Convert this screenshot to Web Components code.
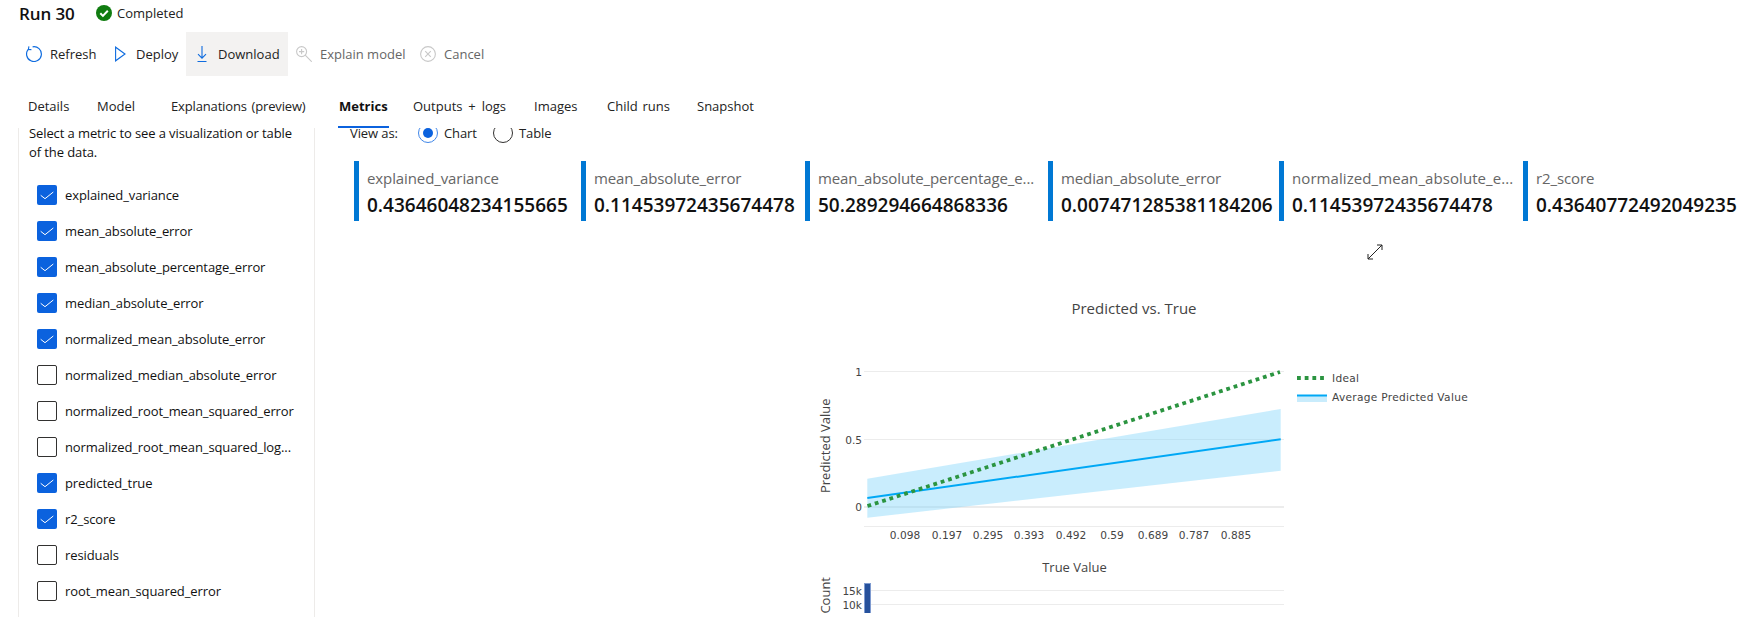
<!DOCTYPE html>
<html>
<head>
<meta charset="utf-8">
<style>
  html, body { margin: 0; height: 632px; overflow: hidden; background: #fff; }
  body { font-family: "Open Sans", "Liberation Sans", sans-serif; color: #111; }
</style>
</head>
<body>
<run-page></run-page>
<script>
const UI_FONT = '"Open Sans", "Liberation Sans", sans-serif';

class RunHeader extends HTMLElement {
  constructor() {
    super();
    this.attachShadow({ mode: 'open' });
    this.shadowRoot.innerHTML = `
      <style>
        :host { display: flex; align-items: center; height: 26px; padding-left: 19px; font-family: ${UI_FONT}; }
        h1 { margin: 0; font-size: 17px; font-weight: 600; color: #111; width: 77px; letter-spacing: -.1px; }
        svg { display: block; margin-right: 5px; }
        span { font-size: 13px; color: #222; }
      </style>
      <h1><slot></slot></h1>
      <svg width="16" height="16" viewBox="0 0 16 16">
        <circle cx="8" cy="8" r="8" fill="#107c10"/>
        <path d="M4.3 8.3l2.6 2.6 4.9-5.2" fill="none" stroke="#fff" stroke-width="2"/>
      </svg>
      <span>Completed</span>`;
  }
}
customElements.define('run-header', RunHeader);

const TOOL_ICONS = {
  refresh: '<path d="M6.6 .8A7.4 7.4 0 1 1 2.5 3.1" fill="none" stroke="#0f6cdf" stroke-width="1.2"/><path d="M2.9 .4L2.4 3.4 5.4 3.6" fill="none" stroke="#0f6cdf" stroke-width="1.1"/>',
  deploy: '<path d="M3.6 1.2v13.6L13 8z" fill="none" stroke="#0f6cdf" stroke-width="1.1"/>',
  download: '<path d="M8 0v12.2M4 8.2l4 4 4-4M3.5 15.5h9" fill="none" stroke="#0f6cdf" stroke-width="1.1"/>',
  explain: '<circle cx="5.6" cy="5.6" r="5" fill="none" stroke="#c8c8c8" stroke-width="1.1"/><path d="M9.2 9.2l6.6 6.6M5.6 3v5.2M3 5.6h5.2" fill="none" stroke="#c8c8c8" stroke-width="1.1"/>',
  cancel: '<circle cx="8" cy="8" r="7.4" fill="none" stroke="#c8c8c8" stroke-width="1.1"/><path d="M5.2 5.2l5.6 5.6M10.8 5.2l-5.6 5.6" fill="none" stroke="#c8c8c8" stroke-width="1.1"/>'
};

class ToolButton extends HTMLElement {
  constructor() {
    super();
    this.attachShadow({ mode: 'open' });
    const icon = TOOL_ICONS[this.getAttribute('icon')];
    this.shadowRoot.innerHTML = `
      <style>
        :host { display: flex; align-items: center; height: 44px; font-size: 13px; font-family: ${UI_FONT}; color: #222; white-space: nowrap; }
        :host([active]), :host([disabled]) { padding-left: 8px; }
        :host([active]) { background: #f3f2f1; }
        :host([disabled]) { color: #666; }
        svg { display: block; flex: none; margin-right: 8px; }
      </style>
      <svg width="16" height="16" viewBox="0 0 16 16">${icon}</svg><slot></slot>`;
  }
}
customElements.define('tool-button', ToolButton);

class RunToolbar extends HTMLElement {
  constructor() {
    super();
    this.attachShadow({ mode: 'open' });
    this.shadowRoot.innerHTML = `
      <style>
        :host { display: grid; grid-template-columns: 86px 74px 102px 124px auto; justify-content: start; margin-top: 6px; height: 44px; padding-left: 26px; }
      </style>
      <slot></slot>`;
  }
}
customElements.define('run-toolbar', RunToolbar);

class TabBar extends HTMLElement {
  constructor() {
    super();
    this.attachShadow({ mode: 'open' });
    this.shadowRoot.innerHTML = `
      <style>
        :host { display: grid; grid-template-columns: 69px 74px 168px 74px 121px 73px 90px auto; justify-content: start; height: 52px; padding-left: 28px; font-family: ${UI_FONT}; font-size: 13px; word-spacing: 1.5px; color: #222; white-space: nowrap; }
      </style>
      <slot></slot>`;
  }
}
customElements.define('tab-bar', TabBar);

class TabItem extends HTMLElement {
  constructor() {
    super();
    this.attachShadow({ mode: 'open' });
    this.shadowRoot.innerHTML = `
      <style>
        :host { display: block; justify-self: start; padding-top: 20px; line-height: 20px; }
        :host([selected]) { font-weight: 700; color: #111; }
        :host([selected]) b { display: block; height: 2px; margin: 10px -1px 0; background: #0b62de; }
      </style>
      <slot></slot><b></b>`;
  }
}
customElements.define('tab-item', TabItem);

class MetricCheck extends HTMLElement {
  constructor() {
    super();
    this.attachShadow({ mode: 'open' });
    const on = this.hasAttribute('checked');
    this.shadowRoot.innerHTML = `
      <style>
        :host { display: flex; align-items: center; height: 20px; margin-bottom: 16px; font-size: 13px; letter-spacing: -.1px; color: #111; white-space: nowrap; }
        i { display: block; box-sizing: border-box; flex: none; width: 20px; height: 20px; border-radius: 2px; margin-right: 8px; border: 1px solid #323130; }
        i.on { background: #0b62de; border: 0; }
        svg { display: block; }
      </style>
      <i class="${on ? 'on' : ''}">${on ? '<svg width="20" height="20" viewBox="0 0 20 20"><path d="M3.7 10.3L8 13.7 16.3 7" fill="none" stroke="#fff" stroke-width="1"/></svg>' : ''}</i>
      <slot></slot>`;
  }
}
customElements.define('metric-check', MetricCheck);

class MetricSidebar extends HTMLElement {
  constructor() {
    super();
    this.attachShadow({ mode: 'open' });
    this.shadowRoot.innerHTML = `
      <style>
        :host { display: block; flex: none; box-sizing: border-box; width: 297px; height: 489px; margin-left: 18px; border-left: 1px solid #edebe9; border-right: 1px solid #edebe9; clip-path: inset(-10px 0 0 0); font-family: ${UI_FONT}; }
        p { margin: -4px 0 23px 10px; width: 272px; font-size: 13px; letter-spacing: -.1px; line-height: 19px; color: #111; }
        div { padding-left: 18px; }
      </style>
      <p>Select a metric to see a visualization or table of the data.</p>
      <div><slot></slot></div>`;
  }
}
customElements.define('metric-sidebar', MetricSidebar);

class ViewToggle extends HTMLElement {
  constructor() {
    super();
    this.attachShadow({ mode: 'open' });
    this.shadowRoot.innerHTML = `
      <style>
        :host { display: flex; align-items: center; height: 30px; margin-top: -10px; padding-left: 35px; font-family: ${UI_FONT}; font-size: 13px; letter-spacing: -.1px; color: #222; white-space: nowrap; }
        .label { width: 68px; }
        .radio { box-sizing: border-box; width: 20px; height: 20px; border-radius: 50%; border: 1px solid #323130; margin-right: 6px; flex: none; clip-path: inset(5px -1px -1px -1px); }
        .radio.on { border-color: #3f86e8; display: flex; align-items: center; justify-content: center; }
        .radio.on::after { content: ""; width: 10px; height: 10px; border-radius: 50%; background: #0b62de; }
        .opt { width: 49px; }
      </style>
      <span class="label">View as:</span>
      <span class="radio on"></span><span class="opt">Chart</span>
      <span class="radio"></span><span>Table</span>`;
  }
}
customElements.define('view-toggle', ViewToggle);

class MetricCard extends HTMLElement {
  constructor() {
    super();
    this.attachShadow({ mode: 'open' });
    this.shadowRoot.innerHTML = `
      <style>
        :host { display: block; height: 60px; border-left: 5px solid #0078d4; padding-left: 8px; font-family: ${UI_FONT}; white-space: nowrap; }
        .name { padding-top: 7px; line-height: 20px; font-size: 15px; letter-spacing: var(--name-spacing, -.1px); color: #666; }
        .val { margin-top: 5px; line-height: 24px; font-size: 19px; font-weight: 600; color: #111; }
      </style>
      <div class="name">${this.getAttribute('name')}</div>
      <div class="val"><slot></slot></div>`;
  }
}
customElements.define('metric-card', MetricCard);

class CardRow extends HTMLElement {
  constructor() {
    super();
    this.attachShadow({ mode: 'open' });
    this.shadowRoot.innerHTML = `
      <style>
        :host { display: grid; grid-template-columns: 227px 224px 243px 231px 244px 220px; margin: 13px 0 0 39px; }
      </style>
      <slot></slot>`;
  }
}
customElements.define('card-row', CardRow);

class ExpandIcon extends HTMLElement {
  constructor() {
    super();
    this.attachShadow({ mode: 'open' });
    this.shadowRoot.innerHTML = `
      <style>
        :host { display: block; width: 16px; height: 16px; margin: 23px 0 0 1052px; }
        svg { display: block; }
      </style>
      <svg width="16" height="16" viewBox="0 0 16 16"><path d="M1 15L15 1M10 1h5v5M1 10v5h5" fill="none" stroke="#222" stroke-width="1"/></svg>`;
  }
}
customElements.define('expand-icon', ExpandIcon);

class PredChart extends HTMLElement {
  constructor() {
    super();
    this.attachShadow({ mode: 'open' });
    const ticks = [[905,'0.098'],[947,'0.197'],[988,'0.295'],[1029,'0.393'],[1071,'0.492'],[1112,'0.59'],[1153,'0.689'],[1194,'0.787'],[1236,'0.885']];
    // viewBox keeps page coordinates, easier to read off the reference
    this.shadowRoot.innerHTML = `
      <style>
        :host { display: block; width: 700px; height: 323px; margin: 30px 0 0 485px; }
        svg { display: block; overflow: hidden; }
        text { font-family: "DejaVu Sans", sans-serif; font-size: 10.6px; fill: #444; }
        .t { font-family: ${UI_FONT}; font-size: 13px; fill: #444; }
      </style>
      <svg width="700" height="323" viewBox="800 290 700 323">
        <text class="t" x="1134" y="314" text-anchor="middle" style="font-size:15px">Predicted vs. True</text>
        <g stroke="#ececec" fill="none">
          <path d="M864 371.5h420M864 439.5h420M864 526.5h420M864 590.5h420M864 604.5h420"/>
          <path d="M864 507h420" stroke-width="2"/>
        </g>
        <path d="M867.3 478.7L1280.7 409V470.7L867.3 517.7z" fill="#7fd4fb" fill-opacity=".42"/>
        <path d="M867.3 498L1280.7 439.3" stroke="#00a8f5" stroke-width="2" fill="none"/>
        <path d="M867.5 506L1280 372" stroke="#2b9440" stroke-width="3.8" stroke-dasharray="3.8 3.9" fill="none"/>
        <text x="862" y="375.5" text-anchor="end">1</text>
        <text x="862" y="443.5" text-anchor="end">0.5</text>
        <text x="862" y="511" text-anchor="end">0</text>
        ${ticks.map(t => `<text x="${t[0]}" y="539" text-anchor="middle">${t[1]}</text>`).join('')}
        <text class="t" transform="translate(830,445.7) rotate(-90)" text-anchor="middle">Predicted Value</text>
        <text class="t" x="1074.5" y="571.5" text-anchor="middle">True Value</text>
        <text class="t" transform="translate(830,577) rotate(-90)" text-anchor="end">Count</text>
        <text x="862" y="594.5" text-anchor="end">15k</text>
        <text x="862" y="608.5" text-anchor="end">10k</text>
        <rect x="864.5" y="583.5" width="6" height="40" fill="#26519c" stroke="#7f9bd0"/>
        <path d="M1297 378h29" stroke="#2b9440" stroke-width="3.8" stroke-dasharray="3.8 3.9" fill="none"/>
        <rect x="1297" y="395" width="30" height="7" fill="#c9ecfc"/>
        <path d="M1297 395.5h30" stroke="#00a8f5" stroke-width="2" fill="none"/>
        <text x="1332" y="382" letter-spacing=".3">Ideal</text>
        <text x="1332" y="401" letter-spacing=".3">Average Predicted Value</text>
      </svg>`;
  }
}
customElements.define('pred-chart', PredChart);

const pageTemplate = document.createElement('template');
pageTemplate.innerHTML = `
  <style>
    :host { display: block; width: 1753px; height: 632px; overflow: hidden; }
    .body { display: flex; }
    .main { flex: 1; min-width: 0; }
  </style>
  <run-header>Run 30</run-header>
  <run-toolbar>
    <tool-button icon="refresh">Refresh</tool-button>
    <tool-button icon="deploy">Deploy</tool-button>
    <tool-button icon="download" active>Download</tool-button>
    <tool-button icon="explain" disabled>Explain model</tool-button>
    <tool-button icon="cancel" disabled>Cancel</tool-button>
  </run-toolbar>
  <tab-bar>
    <tab-item>Details</tab-item>
    <tab-item>Model</tab-item>
    <tab-item style="letter-spacing:-.15px">Explanations (preview)</tab-item>
    <tab-item selected>Metrics</tab-item>
    <tab-item style="word-spacing:2.5px">Outputs + logs</tab-item>
    <tab-item>Images</tab-item>
    <tab-item>Child runs</tab-item>
    <tab-item>Snapshot</tab-item>
  </tab-bar>
  <div class="body">
    <metric-sidebar>
      <metric-check checked>explained_variance</metric-check>
      <metric-check checked>mean_absolute_error</metric-check>
      <metric-check checked>mean_absolute_percentage_error</metric-check>
      <metric-check checked>median_absolute_error</metric-check>
      <metric-check checked>normalized_mean_absolute_error</metric-check>
      <metric-check>normalized_median_absolute_error</metric-check>
      <metric-check>normalized_root_mean_squared_error</metric-check>
      <metric-check>normalized_root_mean_squared_log...</metric-check>
      <metric-check checked>predicted_true</metric-check>
      <metric-check checked>r2_score</metric-check>
      <metric-check>residuals</metric-check>
      <metric-check>root_mean_squared_error</metric-check>
      <metric-check></metric-check>
    </metric-sidebar>
    <div class="main">
      <view-toggle></view-toggle>
      <card-row>
        <metric-card name="explained_variance">0.43646048234155665</metric-card>
        <metric-card name="mean_absolute_error">0.11453972435674478</metric-card>
        <metric-card name="mean_absolute_percentage_e...">50.289294664868336</metric-card>
        <metric-card name="median_absolute_error">0.007471285381184206</metric-card>
        <metric-card name="normalized_mean_absolute_e..." style="--name-spacing:.08px">0.11453972435674478</metric-card>
        <metric-card name="r2_score">0.43640772492049235</metric-card>
      </card-row>
      <expand-icon></expand-icon>
      <pred-chart></pred-chart>
    </div>
  </div>`;

class RunPage extends HTMLElement {
  constructor() {
    super();
    this.attachShadow({ mode: 'open' });
    this.shadowRoot.appendChild(pageTemplate.content.cloneNode(true));
  }
}
customElements.define('run-page', RunPage);
</script>
</body>
</html>
